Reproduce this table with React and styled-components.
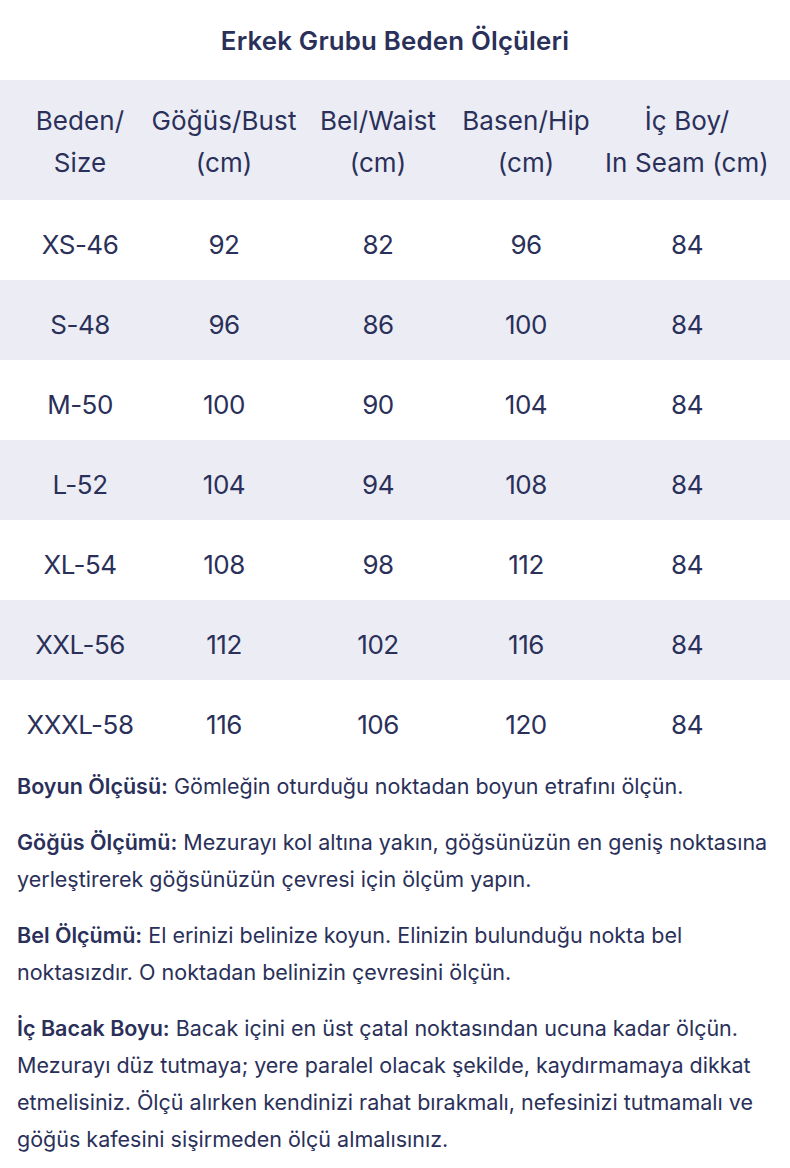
import React from "react";
import styled, { createGlobalStyle } from "styled-components";

const Global = createGlobalStyle`
  html, body { margin: 0; padding: 0; background: #ffffff; }
  body { font-family: Inter, "Noto Sans", sans-serif; color: #2a3059; }
`;

const Page = styled.div`
  width: 790px;
  display: flex;
  flex-direction: column;
`;

const Title = styled.h1`
  margin: 0;
  height: 80px;
  display: flex;
  align-items: center;
  justify-content: center;
  font-size: 25.8px;
  font-weight: 600;
  letter-spacing: 0.2px;
`;

const Table = styled.div`
  display: flex;
  flex-direction: column;
`;

const Row = styled.div`
  display: grid;
  grid-template-columns: 160px 128px 180px 116px 206px;
  height: ${(p) => (p.$head ? 120 : 80)}px;
  background: ${(p) => (p.$shade ? "#ebecf4" : "#ffffff")};
`;

const Cell = styled.div`
  display: flex;
  align-items: center;
  justify-content: center;
  text-align: center;
  white-space: nowrap;
  font-size: 26px;
  line-height: ${(p) => (p.$head ? 42 : 40)}px;
  letter-spacing: ${(p) => (p.$head ? "0.1px" : "-0.5px")};
  padding-top: ${(p) => (p.$head ? 3 : 9)}px;
`;

const Notes = styled.div`
  padding: 8px 17px 0;
  display: flex;
  flex-direction: column;
  gap: 19px;
`;

const Note = styled.p`
  margin: 0;
  font-size: 21.5px;
  line-height: 37px;
  letter-spacing: 0;
`;

const Strong = styled.b`
  font-weight: 600;
`;

const header = [
  ["Beden/", "Size"],
  ["Göğüs/Bust", "(cm)"],
  ["Bel/Waist", "(cm)"],
  ["Basen/Hip", "(cm)"],
  ["İç Boy/", "In Seam (cm)"],
];

const rows = [
  ["XS-46", "92", "82", "96", "84"],
  ["S-48", "96", "86", "100", "84"],
  ["M-50", "100", "90", "104", "84"],
  ["L-52", "104", "94", "108", "84"],
  ["XL-54", "108", "98", "112", "84"],
  ["XXL-56", "112", "102", "116", "84"],
  ["XXXL-58", "116", "106", "120", "84"],
];

const notes = [
  ["Boyun Ölçüsü:", " Gömleğin oturduğu noktadan boyun etrafını ölçün."],
  ["Göğüs Ölçümü:", " Mezurayı kol altına yakın, göğsünüzün en geniş noktasına yerleştirerek göğsünüzün çevresi için ölçüm yapın."],
  ["Bel Ölçümü:", " El erinizi belinize koyun. Elinizin bulunduğu nokta bel noktasızdır. O noktadan belinizin çevresini ölçün."],
  ["İç Bacak Boyu:", " Bacak içini en üst çatal noktasından ucuna kadar ölçün. Mezurayı düz tutmaya; yere paralel olacak şekilde, kaydırmamaya dikkat etmelisiniz. Ölçü alırken kendinizi rahat bırakmalı, nefesinizi tutmamalı ve göğüs kafesini sişirmeden ölçü almalısınız."],
];

export default function App() {
  return (
    <Page>
      <Global />
      <Title>Erkek Grubu Beden Ölçüleri</Title>
      <Table>
        <Row $head $shade>
          {header.map((h, i) => (
            <Cell key={i} $head>
              <span>
                {h[0]}
                <br />
                {h[1]}
              </span>
            </Cell>
          ))}
        </Row>
        {rows.map((r, ri) => (
          <Row key={ri} $shade={ri % 2 === 1}>
            {r.map((v, ci) => (
              <Cell key={ci}>{v}</Cell>
            ))}
          </Row>
        ))}
      </Table>
      <Notes>
        {notes.map((n, i) => (
          <Note key={i}>
            <Strong>{n[0]}</Strong>
            {n[1]}
          </Note>
        ))}
      </Notes>
    </Page>
  );
}
